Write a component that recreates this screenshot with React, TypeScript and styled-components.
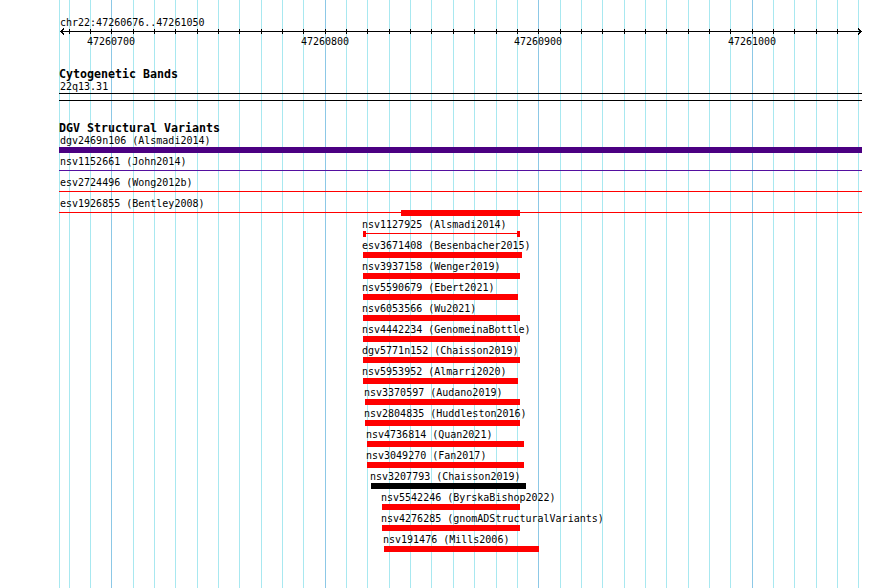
import React from 'react';
import styled, { createGlobalStyle } from 'styled-components';

const GlobalStyle = createGlobalStyle`
  html, body { margin: 0; padding: 0; background: #ffffff; }
  body { font-family: "DejaVu Sans Mono", "Liberation Mono", monospace; }
`;

const MONO = `"DejaVu Sans Mono", "Liberation Mono", monospace`;
const TRACK_LEFT = 59;
const TRACK_RIGHT = 862;

const tickX = (k: number) => Math.round(111.3 + k * 21.345);
const TICKS = Array.from({ length: 38 }, (_, i) => i - 2);

const Page = styled.div`
  position: relative;
  width: 890px;
  height: 588px;
  overflow: hidden;
  background: #ffffff;
  color: #000000;
  font-family: ${MONO};
  font-size: 10px;
`;

const GridSvg = styled.svg`
  position: absolute;
  left: 0;
  top: 0;
  width: 890px;
  height: 588px;
  z-index: 0;
`;

const Content = styled.div`
  position: relative;
  z-index: 1;
`;

const RulerSection = styled.section`
  padding-top: 17px;
`;

const ChrLabel = styled.div`
  margin-left: 60px;
  height: 11px;
  line-height: 11px;
  white-space: nowrap;
`;

const RulerSvg = styled.svg`
  display: block;
  width: 890px;
  height: 8px;
`;

const TickLabels = styled.div`
  position: relative;
  height: 11px;
  line-height: 11px;
`;

const TickLabel = styled.span`
  position: absolute;
  top: 0;
  transform: translateX(-50%);
  white-space: nowrap;
`;

const TrackTitle = styled.h2`
  margin: 20px 0 0 ${TRACK_LEFT}px;
  height: 14px;
  font: bold 11.63px/14px ${MONO};
  white-space: nowrap;
`;

const DgvTitle = styled(TrackTitle)`
  margin-bottom: -3px;
`;

const BandLabel = styled.div`
  margin-left: 60px;
  height: 12px;
  line-height: 11px;
`;

const BandBox = styled.div`
  box-sizing: border-box;
  margin-left: ${TRACK_LEFT}px;
  width: ${TRACK_RIGHT - TRACK_LEFT}px;
  height: 8px;
  border-top: 1px solid #000;
  border-bottom: 1px solid #000;
`;

const Rows = styled.div`
  display: flex;
  flex-direction: column;
`;

const Row = styled.div`
  height: 21px;
`;

const Label = styled.div`
  box-sizing: border-box;
  height: 15px;
  padding-top: 2.5px;
  line-height: 12px;
  white-space: nowrap;
`;

const Slot = styled.div`
  position: relative;
  height: 6px;
`;

const Bar = styled.div<{ $color: string }>`
  position: absolute;
  top: 0;
  height: 6px;
  background: ${(p) => p.$color};
`;

const Line = styled.div<{ $color: string }>`
  position: absolute;
  top: 2px;
  height: 1px;
  background: ${(p) => p.$color};
`;

const Dumbbell = styled.div<{ $color: string }>`
  position: absolute;
  top: 0;
  height: 6px;
  &::before,
  &::after {
    content: '';
    position: absolute;
    top: 0;
    width: 3px;
    height: 6px;
    background: ${(p) => p.$color};
  }
  &::before { left: 0; }
  &::after { right: 0; }
`;

const DumbbellStem = styled.div<{ $color: string }>`
  position: absolute;
  left: 3px;
  right: 3px;
  top: 2px;
  height: 1px;
  background: ${(p) => p.$color};
`;

type Glyph = { kind: 'bar' | 'line' | 'dumbbell'; start: number; end: number; color: string };
type Feature = { label: string; labelX: number; glyphs: Glyph[] };

const RED = '#ff0000';
const INDIGO = '#4b0082';

const bar = (start: number, end: number, color = RED): Glyph => ({ kind: 'bar', start, end, color });

const FEATURES: Feature[] = [
  { label: 'dgv2469n106 (Alsmadi2014)', labelX: 60, glyphs: [bar(TRACK_LEFT, TRACK_RIGHT, INDIGO)] },
  { label: 'nsv1152661 (John2014)', labelX: 60, glyphs: [{ kind: 'line', start: TRACK_LEFT, end: TRACK_RIGHT, color: '#5410a0' }] },
  { label: 'esv2724496 (Wong2012b)', labelX: 60, glyphs: [{ kind: 'line', start: TRACK_LEFT, end: TRACK_RIGHT, color: RED }] },
  {
    label: 'esv1926855 (Bentley2008)',
    labelX: 60,
    glyphs: [{ kind: 'line', start: TRACK_LEFT, end: TRACK_RIGHT, color: RED }, bar(401, 520)],
  },
  { label: 'nsv1127925 (Alsmadi2014)', labelX: 362, glyphs: [{ kind: 'dumbbell', start: 363, end: 520, color: RED }] },
  { label: 'esv3671408 (Besenbacher2015)', labelX: 362, glyphs: [bar(363, 522)] },
  { label: 'nsv3937158 (Wenger2019)', labelX: 362, glyphs: [bar(363, 520)] },
  { label: 'nsv5590679 (Ebert2021)', labelX: 362, glyphs: [bar(363, 518)] },
  { label: 'nsv6053566 (Wu2021)', labelX: 362, glyphs: [bar(363, 520)] },
  { label: 'nsv4442234 (GenomeinaBottle)', labelX: 362, glyphs: [bar(363, 520)] },
  { label: 'dgv5771n152 (Chaisson2019)', labelX: 362, glyphs: [bar(363, 520)] },
  { label: 'nsv5953952 (Almarri2020)', labelX: 362, glyphs: [bar(363, 518)] },
  { label: 'nsv3370597 (Audano2019)', labelX: 364, glyphs: [bar(365, 520)] },
  { label: 'nsv2804835 (Huddleston2016)', labelX: 364, glyphs: [bar(365, 520)] },
  { label: 'nsv4736814 (Quan2021)', labelX: 366, glyphs: [bar(367, 524)] },
  { label: 'nsv3049270 (Fan2017)', labelX: 366, glyphs: [bar(367, 524)] },
  { label: 'nsv3207793 (Chaisson2019)', labelX: 370, glyphs: [bar(371, 526, '#000000')] },
  { label: 'nsv5542246 (ByrskaBishop2022)', labelX: 381, glyphs: [bar(382, 520)] },
  { label: 'nsv4276285 (gnomADStructuralVariants)', labelX: 381, glyphs: [bar(382, 520)] },
  { label: 'nsv191476 (Mills2006)', labelX: 383, glyphs: [bar(384, 539)] },
];

const RULER_LABELS = [
  { k: 0, text: '47260700' },
  { k: 10, text: '47260800' },
  { k: 20, text: '47260900' },
  { k: 30, text: '47261000' },
];

function GlyphView({ g }: { g: Glyph }) {
  const style = { left: g.start, width: g.end - g.start };
  if (g.kind === 'bar') return <Bar $color={g.color} style={style} />;
  if (g.kind === 'line') return <Line $color={g.color} style={style} />;
  return (
    <Dumbbell $color={g.color} style={style}>
      <DumbbellStem $color={g.color} />
    </Dumbbell>
  );
}

export default function App() {
  return (
    <Page>
      <GlobalStyle />
      <GridSvg viewBox="0 0 890 588" shapeRendering="crispEdges">
        <rect x={TRACK_LEFT} y={0} width={1} height={588} fill="#a8e8f0" />
        {TICKS.map((k) => (
          <rect
            key={k}
            x={tickX(k)}
            y={0}
            width={1}
            height={588}
            fill={k % 10 === 0 ? '#8cc8e6' : '#a8e8f0'}
          />
        ))}
      </GridSvg>
      <Content>
        <RulerSection>
          <ChrLabel>chr22:47260676..47261050</ChrLabel>
          <RulerSvg viewBox="0 0 890 8" shapeRendering="crispEdges">
            <rect x={60} y={3} width={801} height={1} fill="#000" />
            {TICKS.slice(0, -1).map((k) => (
              <rect key={k} x={tickX(k)} y={1} width={1} height={5} fill="#000" />
            ))}
            <polyline points="64,0.5 61,3.5 64,6.5" fill="none" stroke="#000" strokeWidth={1} />
            <polyline points="858,0.5 861,3.5 858,6.5" fill="none" stroke="#000" strokeWidth={1} />
          </RulerSvg>
          <TickLabels>
            {RULER_LABELS.map((l) => (
              <TickLabel key={l.k} style={{ left: tickX(l.k) }}>
                {l.text}
              </TickLabel>
            ))}
          </TickLabels>
        </RulerSection>

        <section>
          <TrackTitle>Cytogenetic Bands</TrackTitle>
          <BandLabel>22q13.31</BandLabel>
          <BandBox />
        </section>

        <section>
          <DgvTitle>DGV Structural Variants</DgvTitle>
          <Rows>
            {FEATURES.map((f) => (
              <Row key={f.label}>
                <Label style={{ marginLeft: f.labelX }}>{f.label}</Label>
                <Slot>
                  {f.glyphs.map((g, i) => (
                    <GlyphView key={i} g={g} />
                  ))}
                </Slot>
              </Row>
            ))}
          </Rows>
        </section>
      </Content>
    </Page>
  );
}
